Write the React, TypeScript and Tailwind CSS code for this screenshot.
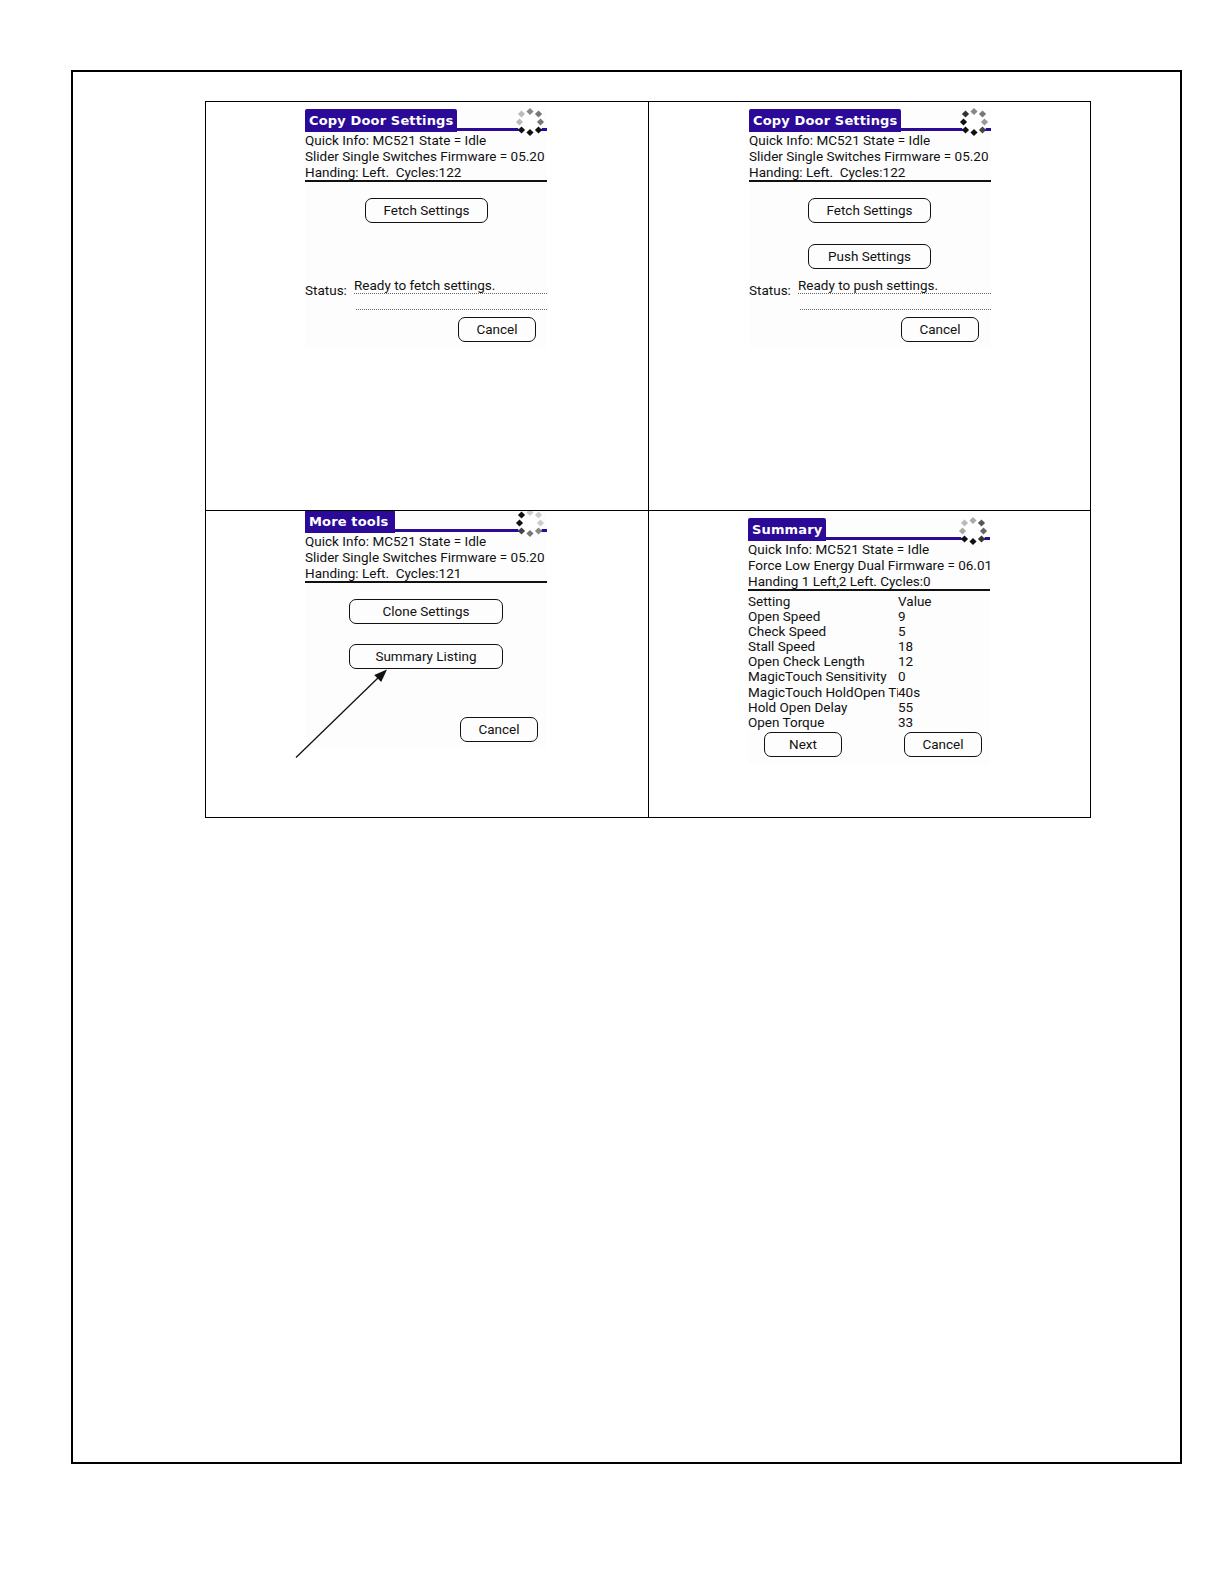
import React from 'react';

const DOT_POS = [
  [0, -10.5], [8.5, -8], [10.5, 0], [8.5, 8], [0, 10.5], [-8.5, 8], [-10.5, 0], [-8.5, -8],
];

// dots start at top and go clockwise, each screenshot caught the spinner on a different frame
const Spinner: React.FC<{ shades: string[] }> = ({ shades }) => (
  <svg width="30" height="30" viewBox="-15 -15 30 30">
    <circle r="13.5" fill="#ffffff" />
    {DOT_POS.map(([x, y], i) => (
      <polygon
        key={i}
        points={`${x},${y - 3.6} ${x + 3.6},${y} ${x},${y + 3.6} ${x - 3.6},${y}`}
        fill={shades[i]}
      />
    ))}
  </svg>
);

const TitleBar: React.FC<{ title: string; shades: string[]; barWidth: string }> = ({ title, shades, barWidth }) => (
  <div className="relative h-[23px]">
    <div className="absolute left-0 right-0 top-[19px] h-[3px] bg-[#2a0a96]" />
    <div className={`absolute left-0 top-0 h-[23px] bg-[#2a0a96] rounded-t-[2px] pl-[4px] overflow-hidden text-white font-['DejaVu_Sans',sans-serif] font-bold text-[13px] tracking-[0.15px] leading-[24px] whitespace-nowrap ${barWidth}`}>
      {title}
    </div>
    <div className="absolute left-[210px] top-[-2px]">
      <Spinner shades={shades} />
    </div>
  </div>
);

const InfoLines: React.FC<{ line2: string; line3: string }> = ({ line2, line3 }) => (
  <div className="border-b-2 border-[#111] h-[50px] text-[13.5px] leading-[16px] whitespace-pre overflow-hidden">
    <div>Quick Info: MC521 State = Idle</div>
    <div>{line2}</div>
    <div>{line3}</div>
  </div>
);

const PalmButton: React.FC<{ label: string; className: string }> = ({ label, className }) => (
  <div className={`h-[25px] border-[1.5px] border-[#111] rounded-[7px] flex items-center justify-center text-[13.5px] ${className}`}>
    {label}
  </div>
);

const StatusRow: React.FC<{ text: string }> = ({ text }) => (
  <div className="flex items-start text-[13.5px]">
    <div className="w-[49px] pt-[4px] leading-[16px]">Status:</div>
    <div className="flex-1">
      <div className="h-[16px] border-b border-dotted border-[#666] leading-[15px] whitespace-nowrap">{text}</div>
      <div className="h-[16px] border-b border-dotted border-[#666] ml-[2px]" />
    </div>
  </div>
);

const S1 = ['#888888', '#777777', '#777777', '#111111', '#111111', '#111111', '#bbbbbb', '#bbbbbb'];
const S2 = ['#888888', '#777777', '#999999', '#444444', '#111111', '#111111', '#111111', '#333333'];
const S3 = ['#cccccc', '#cccccc', '#cccccc', '#888888', '#777777', '#444444', '#111111', '#111111'];
const S4 = ['#aaaaaa', '#555555', '#666666', '#333333', '#111111', '#111111', '#aaaaaa', '#bbbbbb'];

const SUMMARY = [
  ['Setting', 'Value'],
  ['Open Speed', '9'],
  ['Check Speed', '5'],
  ['Stall Speed', '18'],
  ['Open Check Length', '12'],
  ['MagicTouch Sensitivity', '0'],
  ['MagicTouch HoldOpen Time', '40s'],
  ['Hold Open Delay', '55'],
  ['Open Torque', '33'],
];

const App: React.FC = () => {
  return (
    <div className="w-[1224px] h-[1584px] bg-white pt-[70px] pl-[71px] font-['Roboto',sans-serif] text-[#111]">
      <div className="w-[1111px] h-[1394px] border-2 border-black pt-[29px] pl-[132px]">
        <div className="w-[886px] h-[717px] border border-black grid grid-cols-[443px_1fr] grid-rows-[409px_1fr]">
          {/* top left */}
          <div className="border-r border-b border-black pt-[7px] pl-[99px]">
            <div className="w-[242px] pb-[7px] bg-[#fdfdfd]">
              <TitleBar title="Copy Door Settings" shades={S1} barWidth="w-[152px]" />
              <InfoLines line2="Slider Single Switches Firmware = 05.20" line3="Handing: Left.  Cycles:122" />
              <PalmButton label="Fetch Settings" className="w-[123px] ml-[60px] mt-[16px]" />
              <div className="mt-[55px]"><StatusRow text="Ready to fetch settings." /></div>
              <PalmButton label="Cancel" className="w-[78px] ml-[153px] mt-[7px]" />
            </div>
          </div>

          {/* top right */}
          <div className="border-b border-black pt-[7px] pl-[100px]">
            <div className="w-[242px] pb-[7px] bg-[#fdfdfd]">
              <TitleBar title="Copy Door Settings" shades={S2} barWidth="w-[152px]" />
              <InfoLines line2="Slider Single Switches Firmware = 05.20" line3="Handing: Left.  Cycles:122" />
              <PalmButton label="Fetch Settings" className="w-[123px] ml-[59px] mt-[16px]" />
              <PalmButton label="Push Settings" className="w-[123px] ml-[59px] mt-[21px]" />
              <div className="mt-[9px]"><StatusRow text="Ready to push settings." /></div>
              <PalmButton label="Cancel" className="w-[78px] ml-[152px] mt-[7px]" />
            </div>
          </div>

          {/* bottom left, its title bar is cut by the table rule */}
          <div className="relative overflow-hidden border-r border-black pl-[99px]">
            <div className="w-[242px] -mt-[1px] pb-[7px] bg-[#fdfdfd]">
              <TitleBar title="More tools" shades={S3} barWidth="w-[90px]" />
              <InfoLines line2="Slider Single Switches Firmware = 05.20" line3="Handing: Left.  Cycles:121" />
              <PalmButton label="Clone Settings" className="w-[154px] ml-[44px] mt-[16px]" />
              <PalmButton label="Summary Listing" className="w-[154px] ml-[44px] mt-[20px]" />
              <PalmButton label="Cancel" className="w-[78px] ml-[155px] mt-[48px]" />
            </div>
            <svg width="96" height="96" viewBox="0 0 96 96" className="absolute left-[88px] top-[155px]">
              <line x1="2" y1="91.5" x2="87" y2="9" stroke="#111" strokeWidth="1.3" />
              <polygon points="93,3.5 87.2,16.1 80.2,8.9" fill="#111" />
            </svg>
          </div>

          {/* bottom right */}
          <div className="pt-[7px] pl-[99px]">
            <div className="w-[242px] pb-[7px] bg-[#fdfdfd]">
              <TitleBar title="Summary" shades={S4} barWidth="w-[78px]" />
              <InfoLines line2="Force Low Energy Dual Firmware = 06.01" line3="Handing 1 Left,2 Left. Cycles:0" />
              <div className="mt-[3px] text-[13.5px] leading-[15px]">
                {SUMMARY.map(([name, value]) => (
                  <div key={name} className="flex h-[15.1px] whitespace-nowrap">
                    <div className="w-[150px] overflow-hidden">{name}</div>
                    <div>{value}</div>
                  </div>
                ))}
              </div>
              <div className="flex mt-[2px]">
                <PalmButton label="Next" className="w-[78px] ml-[16px]" />
                <PalmButton label="Cancel" className="w-[78px] ml-[62px]" />
              </div>
            </div>
          </div>
        </div>
      </div>
    </div>
  );
};

export default App;
